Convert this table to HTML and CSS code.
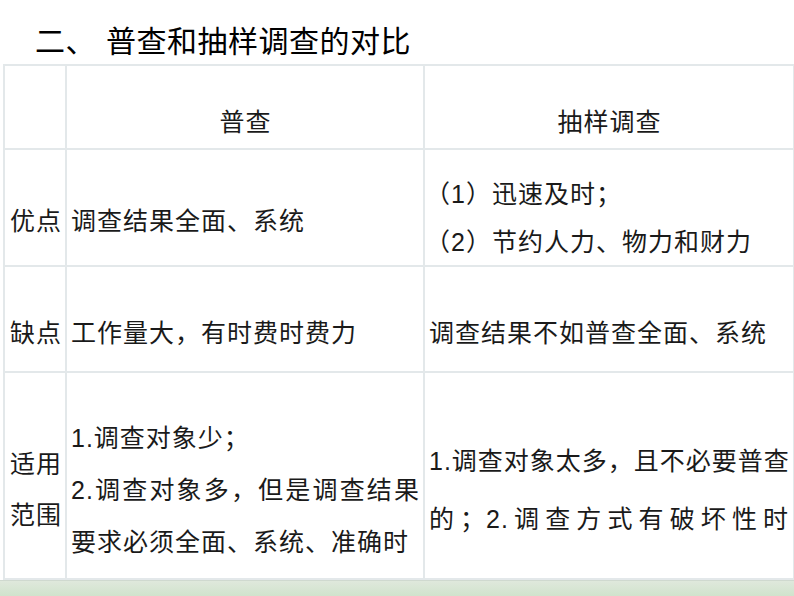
FILE: index.html
```html
<!DOCTYPE html>
<html lang="zh-CN">
<head>
<meta charset="utf-8">
<title>普查和抽样调查的对比</title>
<link rel="stylesheet" href="styles.css">
</head>
<body>
<div class="slide">
  <h1 class="title">二、<span class="title-main">普查和抽样调查的对比</span></h1>
  <table class="compare">
    <colgroup>
      <col class="c-label">
      <col class="c-census">
      <col class="c-sample">
    </colgroup>
    <tr class="r-head">
      <td></td>
      <td class="center">普查</td>
      <td class="center">抽样调查</td>
    </tr>
    <tr class="r-adv">
      <td class="label">优点</td>
      <td>调查结果全面、系统</td>
      <td class="tight"><div class="l1">（1）迅速及时；</div><div class="l2">（2）节约人力、物力和财力</div></td>
    </tr>
    <tr class="r-dis">
      <td class="label">缺点</td>
      <td>工作量大，有时费时费力</td>
      <td>调查结果不如普查全面、系统</td>
    </tr>
    <tr class="r-scope">
      <td class="label">适用<br>范围</td>
      <td class="lines"><div>1.调查对象少；</div><div class="justified">2.调查对象多，但是调查结果</div><div>要求必须全面、系统、准确时</div></td>
      <td class="wide"><div class="justified">1.调查对象太多，且不必要普查</div><div class="justified">的；2.调查方式有破坏性时</div></td>
    </tr>
  </table>
  <div class="band"></div>
</div>
</body>
</html>
```
FILE: styles.css
```css
html, body {
  margin: 0;
  padding: 0;
  background: #ffffff;
}
.slide {
  width: 794px;
  height: 596px;
  overflow: hidden;
  display: flex;
  flex-direction: column;
  font-family: "Liberation Sans", "Noto Sans CJK SC", sans-serif;
  color: #1a1a1a;
}
.title {
  margin: 0;
  height: 64px;
  flex: none;
  box-sizing: border-box;
  padding: 25px 0 0 35px;
  font-size: 30px;
  line-height: 34px;
  font-weight: 400;
  color: #000000;
  letter-spacing: 0.5px;
  white-space: nowrap;
}
.title-main {
  margin-left: 10px;
}
.compare {
  flex: none;
  margin-left: 3px;
  width: 790px;
  height: 514px;
  border-collapse: collapse;
  table-layout: fixed;
  font-size: 25px;
  letter-spacing: 1px;
  line-height: 51px;
}
.c-label { width: 62px; }
.c-census { width: 358px; }
.c-sample { width: 370px; }
.compare td {
  border: 2px solid #e3e8ea;
  padding: 28px 3px 0 4px;
  vertical-align: middle;
  white-space: nowrap;
}
.compare td.label {
  padding-left: 5px;
  padding-right: 0;
}
.compare td.center {
  text-align: center;
  padding-top: 30px;
}
.r-head { height: 84px; }
.r-adv { height: 117px; }
.r-dis { height: 106px; }
.r-scope { height: 207px; }
.compare td.tight {
  vertical-align: top;
  padding-top: 19px;
  padding-left: 0;
}
.tight .l1 { line-height: 50px; }
.tight .l2 { line-height: 46px; }
.compare td.lines {
  line-height: 52px;
}
.compare td.wide {
  line-height: 58px;
  padding-right: 4px;
}
.justified {
  text-align: justify;
  text-align-last: justify;
}
.band {
  flex: 1;
  border-top: 1px solid #cfd9cf;
  background: linear-gradient(#dfe8dc, #d0e3cc);
}
```
